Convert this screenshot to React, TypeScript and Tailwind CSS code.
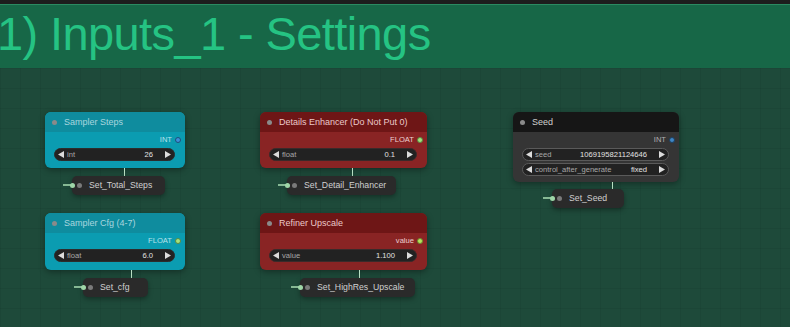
type Widget = { label: string; value: string };

type GraphNode = {
  title: string;
  box: string;
  titleCls: string;
  bodyCls: string;
  titleText: string;
  outLabel: string;
  outCls: string;
  outDot: string;
  widgetCls: string;
  widgets: Widget[];
};

type SetNode = {
  label: string;
  box: string;
  link: string;
};

const nodes: GraphNode[] = [
  {
    title: "Sampler Steps",
    box: "left-[45px] top-[112px] w-[140px] h-[56px]",
    titleCls: "bg-[#0f8c9e]",
    bodyCls: "bg-[#0b9cb1]",
    titleText: "text-[#a9d6de]",
    outLabel: "INT",
    outCls: "text-[#b8e2ea]",
    outDot: "bg-[#3d8fd8] border border-[#1d4f7a]",
    widgetCls: "border-[#2c2c2c]",
    widgets: [{ label: "int", value: "26" }],
  },
  {
    title: "Sampler Cfg (4-7)",
    box: "left-[45px] top-[213px] w-[140px] h-[57px]",
    titleCls: "bg-[#0f8c9e]",
    bodyCls: "bg-[#0b9cb1]",
    titleText: "text-[#a9d6de]",
    outLabel: "FLOAT",
    outCls: "text-[#b8e2ea]",
    outDot: "bg-[#a6e27f] border border-[#5a8a40]",
    widgetCls: "border-[#2c2c2c]",
    widgets: [{ label: "float", value: "6.0" }],
  },
  {
    title: "Details Enhancer (Do Not Put 0)",
    box: "left-[260px] top-[112px] w-[167px] h-[56px]",
    titleCls: "bg-[#6e1616]",
    bodyCls: "bg-[#892424]",
    titleText: "text-[#ebc9c9]",
    outLabel: "FLOAT",
    outCls: "text-[#ecd0d0]",
    outDot: "bg-[#a6e27f] border border-[#5a8a40]",
    widgetCls: "border-[#3a2a2a]",
    widgets: [{ label: "float", value: "0.1" }],
  },
  {
    title: "Refiner Upscale",
    box: "left-[260px] top-[213px] w-[167px] h-[57px]",
    titleCls: "bg-[#6e1616]",
    bodyCls: "bg-[#892424]",
    titleText: "text-[#ebc9c9]",
    outLabel: "value",
    outCls: "text-[#ecd0d0]",
    outDot: "bg-[#b9e25c] border border-[#6a8a30]",
    widgetCls: "border-[#3a2a2a]",
    widgets: [{ label: "value", value: "1.100" }],
  },
  {
    title: "Seed",
    box: "left-[513px] top-[112px] w-[166px] h-[70px]",
    titleCls: "bg-[#161616]",
    bodyCls: "bg-[#353535]",
    titleText: "text-[#cfcfcf]",
    outLabel: "INT",
    outCls: "text-[#b0b0b0]",
    outDot: "bg-[#3f86c4] border border-[#1c3f60]",
    widgetCls: "border-[#5a5a5a]",
    widgets: [
      { label: "seed", value: "1069195821124646" },
      { label: "control_after_generate", value: "fixed" },
    ],
  },
];

const setNodes: SetNode[] = [
  { label: "Set_Total_Steps", box: "left-[72px] top-[176px] w-[93px]", link: "left-[124px] top-[168px] h-[8px]" },
  { label: "Set_cfg", box: "left-[83px] top-[278px] w-[65px]", link: "left-[131px] top-[270px] h-[8px]" },
  { label: "Set_Detail_Enhancer", box: "left-[287px] top-[176px] w-[109px]", link: "left-[352px] top-[168px] h-[8px]" },
  { label: "Set_HighRes_Upscale", box: "left-[300px] top-[278px] w-[115px]", link: "left-[359px] top-[270px] h-[8px]" },
  { label: "Set_Seed", box: "left-[552px] top-[189px] w-[72px]", link: "left-[612px] top-[182px] h-[7px]" },
];

const Arrow = ({ dir }: { dir: "l" | "r" }) => (
  <svg width="6" height="7" viewBox="0 0 6 7" className="shrink-0">
    {dir === "l" ? (
      <polygon points="6,0 6,7 0,3.5" fill="#dcdcdc" />
    ) : (
      <polygon points="0,0 0,7 6,3.5" fill="#dcdcdc" />
    )}
  </svg>
);

const Node = ({ node }: { node: GraphNode }) => (
  <div className={`absolute ${node.box} rounded-[6px] overflow-hidden flex flex-col shadow-[0_2px_6px_rgba(0,0,0,0.35)] ${node.bodyCls}`}>
    {/* title bar */}
    <div className={`h-[20px] shrink-0 flex items-center pl-[7px] gap-[7px] ${node.titleCls}`}>
      <div className="w-[5px] h-[5px] rounded-full bg-[#8a8a8a]" />
      <span className={`text-[9px] leading-none whitespace-nowrap ${node.titleText}`}>{node.title}</span>
    </div>
    {/* output slot */}
    <div className="h-[10px] mt-[3px] flex items-center justify-end pr-[4px] gap-[3px]">
      <span className={`text-[7.6px] leading-none ${node.outCls}`}>{node.outLabel}</span>
      <div className={`w-[6px] h-[6px] rounded-full ${node.outDot}`} />
    </div>
    {/* widgets */}
    <div className="flex flex-col gap-[2px] mt-[3px] pl-[9px] pr-[10px]">
      {node.widgets.map((w) => (
        <div
          key={w.label}
          className={`h-[13px] rounded-full bg-[#222222] border flex items-center px-[3px] gap-[3px] text-[7.6px] leading-none ${node.widgetCls}`}
        >
          <Arrow dir="l" />
          <span className="text-[#a8a8a8] whitespace-nowrap">{w.label}</span>
          <span className="ml-auto text-[#e2e2e2] whitespace-nowrap pr-[9px]">{w.value}</span>
          <Arrow dir="r" />
        </div>
      ))}
    </div>
  </div>
);

const SetBox = ({ node }: { node: SetNode }) => (
  <>
    <div className={`absolute ${node.link} w-[1px] bg-[#b9e0c4]`} />
    <div className={`absolute ${node.box} h-[19px] rounded-[5px] bg-[#2a2a2a] flex items-center pl-[5px] gap-[7px] shadow-[0_2px_5px_rgba(0,0,0,0.35)]`}>
      {/* input slot */}
      <div className="absolute -left-[9px] top-[8px] w-[8px] h-[2px] bg-[#86b894]" />
      <div className="absolute -left-[2px] top-[6.5px] w-[5px] h-[5px] rounded-full bg-[#9fd6a8]" />
      <div className="w-[5px] h-[5px] rounded-full bg-[#7a7a7a]" />
      <span className="text-[8.7px] leading-none text-[#d0d0d0] whitespace-nowrap">{node.label}</span>
    </div>
  </>
);

export default function App() {
  return (
    <div className="relative w-[790px] h-[327px] overflow-hidden bg-[#1e4a3a] font-['Liberation_Sans',Arial,sans-serif]">
      <div className="h-[4px] bg-[#1d1d1d]" />
      {/* group header */}
      <div className="h-[64px] bg-[#176747] border-t border-[#2b8a61] pt-[5px] overflow-hidden">
        <div className="-ml-[3px] text-[47px] leading-none tracking-[-0.6px] text-[#25c383] whitespace-nowrap">
          1) Inputs_1 - Settings
        </div>
      </div>
      {/* canvas grid */}
      <div className="absolute left-0 right-0 top-[68px] bottom-0 bg-[linear-gradient(to_right,rgba(0,0,0,0.06)_1px,transparent_1px),linear-gradient(to_bottom,rgba(0,0,0,0.06)_1px,transparent_1px)] bg-[size:20px_20px]" />
      {nodes.map((n) => (
        <Node key={n.title} node={n} />
      ))}
      {setNodes.map((s) => (
        <SetBox key={s.label} node={s} />
      ))}
    </div>
  );
}
